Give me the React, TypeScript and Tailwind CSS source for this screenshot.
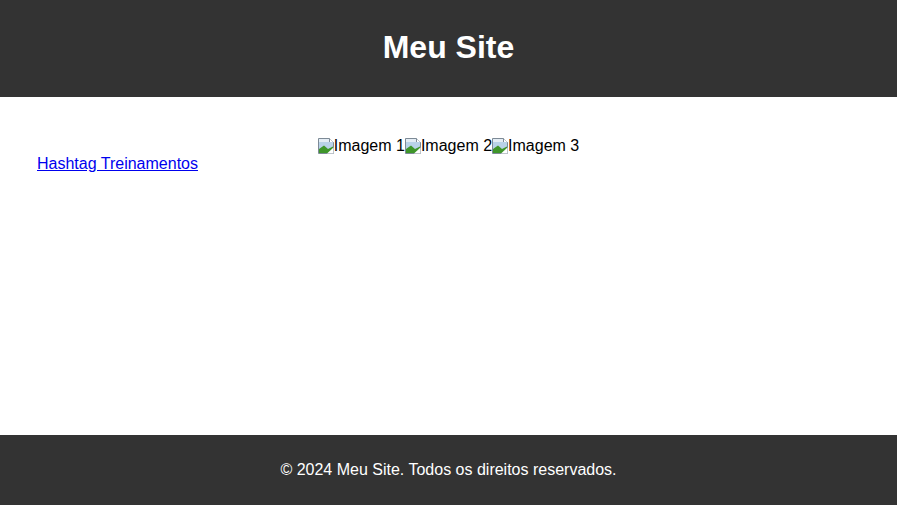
import React from "react";

function BrokenImage({ alt }: { alt: string }) {
  return (
    <span>
      <svg
        width="16"
        height="16"
        viewBox="0 0 16 16"
        className="inline-block h-4 w-4 shrink-0 align-[-3px]"
      >
        <path d="M0.5 0.5h11l4 4v11h-15z" fill="#e4edf5" stroke="#7d8a96" />
        <path d="M11.5 0.5v4h4" fill="#ffffff" stroke="#7d8a96" />
        <rect x="1" y="4" width="14" height="7" fill="#b9d2e8" />
        <path d="M1 15 L1 11 L6 7.5 L10 11 L15 8.5 L15 15 Z" fill="#3f962a" />
        <path d="M9 15.5 L15.5 9.5 L15.5 15.5 Z" fill="#ffffff" />
      </svg>
      {alt}
    </span>
  );
}

export default function App() {
  return (
    <div className="flex h-screen flex-col bg-white font-['Liberation_Sans',Arial,sans-serif] text-black">
      {/* Header */}
      <header className="flex h-[97px] shrink-0 items-center justify-center bg-[#333333] pb-[4px]">
        <h1 className="text-[32px] font-bold leading-none text-white">Meu Site</h1>
      </header>

      {/* Main */}
      <main className="flex-1 pt-[40px] text-[16px]">
        <div className="text-center leading-[18px]">
          <BrokenImage alt="Imagem 1" />
          <BrokenImage alt="Imagem 2" />
          <BrokenImage alt="Imagem 3" />
        </div>
        <div className="pl-[37px] leading-[18px]">
          <a href="#" className="text-[#0000ee] underline">
            Hashtag Treinamentos
          </a>
        </div>
      </main>

      {/* Footer */}
      <footer className="flex h-[70px] shrink-0 items-center justify-center bg-[#333333] text-[16px] text-white">
        <p>© 2024 Meu Site. Todos os direitos reservados.</p>
      </footer>
    </div>
  );
}
